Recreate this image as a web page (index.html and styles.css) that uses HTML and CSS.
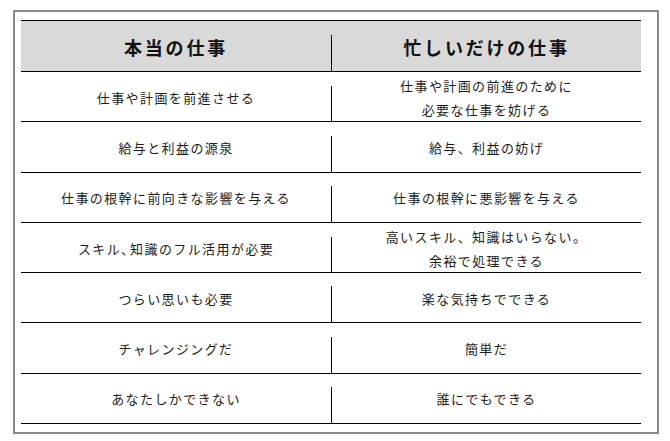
FILE: index.html
```html
<!DOCTYPE html>
<html lang="ja">
<head>
<meta charset="utf-8">
<link rel="stylesheet" href="styles.css">
</head>
<body>
<div class="frame">
  <div class="table">
    <div class="row head">
      <div class="cell">本当の仕事</div>
      <div class="divider"></div>
      <div class="cell">忙しいだけの仕事</div>
    </div>
    <div class="row">
      <div class="cell">仕事や計画を前進させる</div>
      <div class="divider"></div>
      <div class="cell">仕事や計画の前進のために<br>必要な仕事を妨げる</div>
    </div>
    <div class="row">
      <div class="cell">給与と利益の源泉</div>
      <div class="divider"></div>
      <div class="cell">給与、利益の妨げ</div>
    </div>
    <div class="row">
      <div class="cell">仕事の根幹に前向きな影響を与える</div>
      <div class="divider"></div>
      <div class="cell">仕事の根幹に悪影響を与える</div>
    </div>
    <div class="row">
      <div class="cell">スキル<span class="tight">、</span>知識のフル活用が必要</div>
      <div class="divider"></div>
      <div class="cell">高いスキル、知識はいらない。<br>余裕で処理できる</div>
    </div>
    <div class="row">
      <div class="cell">つらい思いも必要</div>
      <div class="divider"></div>
      <div class="cell">楽な気持ちでできる</div>
    </div>
    <div class="row">
      <div class="cell">チャレンジングだ</div>
      <div class="divider"></div>
      <div class="cell">簡単だ</div>
    </div>
    <div class="row">
      <div class="cell">あなたしかできない</div>
      <div class="divider"></div>
      <div class="cell">誰にでもできる</div>
    </div>
  </div>
</div>
</body>
</html>
```
FILE: styles.css
```css
html, body {
  margin: 0;
  padding: 0;
  background: #ffffff;
}
body {
  font-family: "Noto Sans CJK JP", "Noto Sans", sans-serif;
  color: #1c1c1c;
}
.frame {
  box-sizing: border-box;
  margin: 10px 0 0 13px;
  width: 646px;
  height: 424px;
  border: 2px solid #8a8a8a;
  padding: 8px 16px 8px 6px;
}
.table {
  width: 620px;
  display: flex;
  flex-direction: column;
}
.row {
  display: grid;
  grid-template-columns: 310px 1px 1fr;
  height: 50.3px;
  box-sizing: border-box;
  border-bottom: 1px solid #000000;
}
.head {
  height: 52px;
  background: #d9d9d9;
  border-top: 1px solid #000000;
}
.cell {
  display: flex;
  align-items: center;
  justify-content: center;
  text-align: center;
  font-size: 13px;
  letter-spacing: 1.4px;
  line-height: 24px;
  padding-top: 2px;
}
.tight {
  letter-spacing: -5px;
  margin-right: 1px;
}
.head .cell {
  font-size: 18px;
  font-weight: 700;
  letter-spacing: 2.8px;
  color: #111111;
  padding-top: 1px;
}
.divider {
  align-self: end;
  height: 36px;
  background: #000000;
}
```
